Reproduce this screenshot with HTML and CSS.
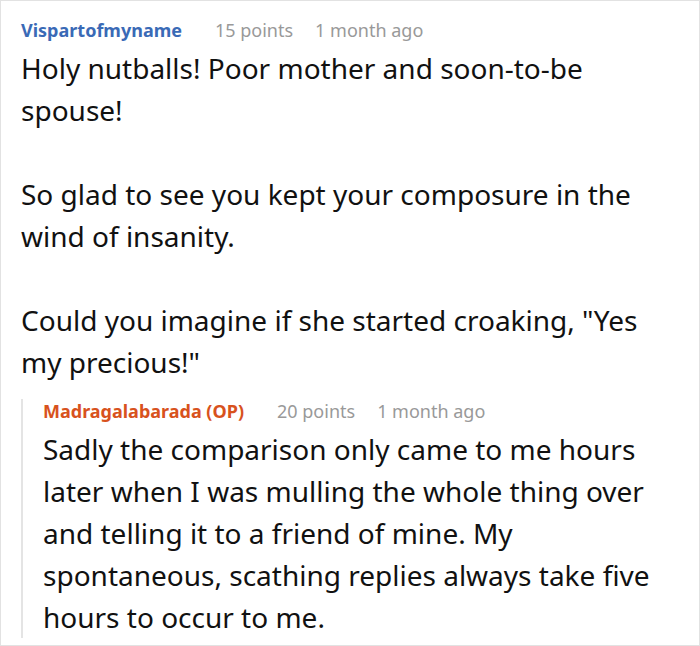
FILE: index.html
```html
<!DOCTYPE html>
<html>
<head>
<meta charset="utf-8">
<link rel="stylesheet" href="styles.css">
</head>
<body>
<div class="comment">
  <div class="meta">
    <span class="author">Vispartofmyname</span>
    <span class="info">15 points</span>
    <span class="info">1 month ago</span>
  </div>
  <div class="text">
    <p>Holy nutballs! Poor mother and soon-to-be spouse!</p>
    <p>So glad to see you kept your composure in the wind of insanity.</p>
    <p>Could you imagine if she started croaking, "Yes my precious!"</p>
  </div>
  <div class="reply">
    <div class="meta">
      <span class="author op">Madragalabarada (OP)</span>
      <span class="info">20 points</span>
      <span class="info">1 month ago</span>
    </div>
    <div class="text">
      <p>Sadly the comparison only came to me hours later when I was mulling the whole thing over and telling it to a friend of mine. My spontaneous, scathing replies always take five hours to occur to me.</p>
    </div>
  </div>
</div>
</body>
</html>
```

FILE: styles.css
```css
html, body {
  margin: 0;
  padding: 0;
  background: #fff;
}
.comment {
  box-sizing: border-box;
  width: 700px;
  height: 646px;
  border: 1px solid #e2e2e2;
  padding: 17px 20px 0 20px;
  font-family: "Noto Sans", "Open Sans", sans-serif;
  color: #111;
}
.meta {
  display: flex;
  gap: 22px;
  font-size: 18px;
  line-height: 24px;
  margin-bottom: 5px;
}
.author {
  font-weight: 700;
  color: #3a6ab6;
}
.author.op {
  color: #d8521d;
}
.info {
  color: #999;
  margin-left: 11px;
}
.info + .info {
  margin-left: 0;
}
.text {
  font-size: 28px;
  line-height: 42px;
}
.text p {
  margin: 0 0 42px 0;
}
.text p:last-child {
  margin-bottom: 0;
}
.reply {
  margin-top: 25px;
  border-left: 2px solid #e4e4e4;
  padding-left: 20px;
}
.reply .meta {
  margin-top: -9px;
}
.reply .text {
  margin-bottom: -10px;
}
```
